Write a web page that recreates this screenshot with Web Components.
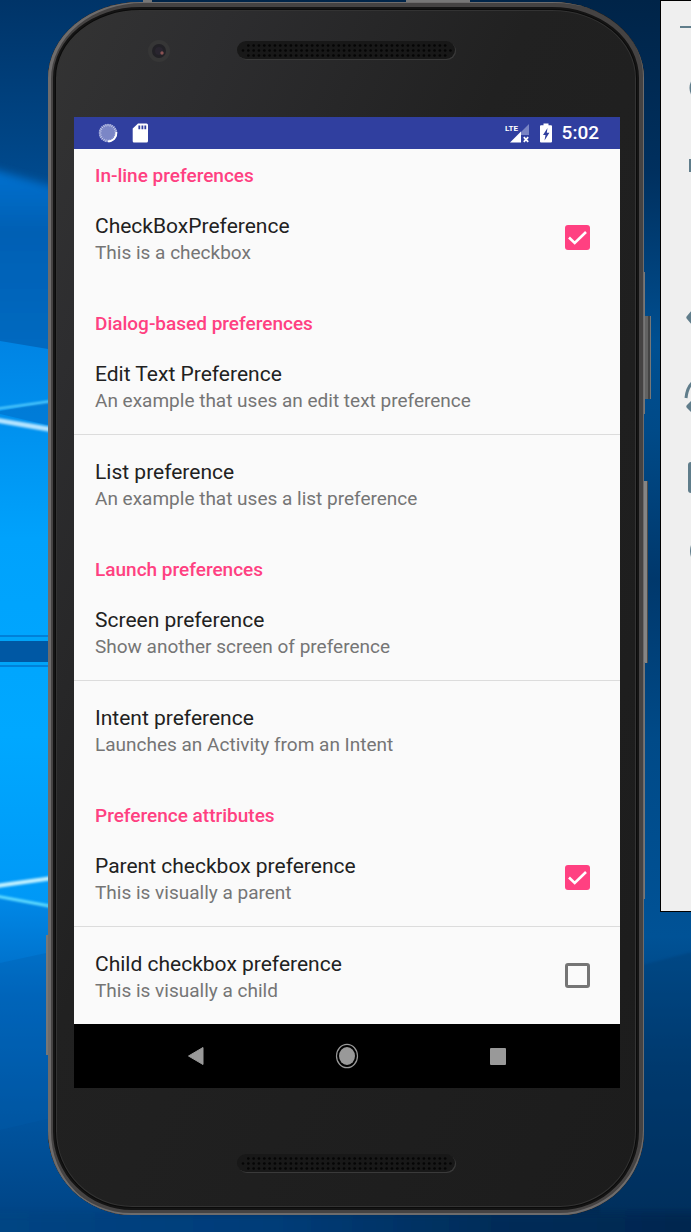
<!DOCTYPE html>
<html lang="en">
<head>
<meta charset="utf-8">
<title>Preferences</title>
<style>
html,body{margin:0;min-height:100%}
body{font-family:Roboto,"Noto Sans",sans-serif;background:#003a70}
</style>
</head>
<body>
<desk-top>
  <phone-device>
    <status-bar time="5:02"></status-bar>
    <pref-list>
      <pref-group heading="In-line preferences">
        <pref-check heading="CheckBoxPreference" summary="This is a checkbox" checked></pref-check>
      </pref-group>
      <pref-group heading="Dialog-based preferences">
        <pref-item heading="Edit Text Preference" summary="An example that uses an edit text preference" divided></pref-item>
        <pref-item heading="List preference" summary="An example that uses a list preference"></pref-item>
      </pref-group>
      <pref-group heading="Launch preferences">
        <pref-item heading="Screen preference" summary="Show another screen of preference" divided></pref-item>
        <pref-item heading="Intent preference" summary="Launches an Activity from an Intent"></pref-item>
      </pref-group>
      <pref-group heading="Preference attributes">
        <pref-check heading="Parent checkbox preference" summary="This is visually a parent" checked divided></pref-check>
        <pref-check heading="Child checkbox preference" summary="This is visually a child"></pref-check>
      </pref-group>
    </pref-list>
    <nav-bar></nav-bar>
  </phone-device>
  <emulator-tools slot="tools"></emulator-tools>
</desk-top>
<script>
class Base extends HTMLElement {
  constructor() {
    super();
    this.attachShadow({ mode: 'open' });
  }
  connectedCallback() {
    this.shadowRoot.innerHTML = this.view();
  }
}

customElements.define('desk-top', class extends Base {
  view() {
    return `<style>
:host{display:flex;position:relative;min-height:100vh;box-sizing:border-box;padding-left:48px;gap:16px;overflow:hidden;
 background:linear-gradient(#002448,#00305f 14%,#004f91 28%,#004a88 35%,#00386c 47%,#004a88 60%,#005296 76%,#00386c 87%,#002850)}
.wall{position:absolute;inset:0;width:100%;height:100%}
.phone{flex:1;position:relative;padding:2px 0 17px;min-width:0}
.tools{position:relative;flex:0 0 31px}
</style>
<svg class="wall" viewBox="0 0 691 1232" preserveAspectRatio="none" aria-hidden="true">
<defs>
<linearGradient id="t" x2="0" y2="1"><stop stop-color="#003468"/><stop offset=".5" stop-color="#004a8e"/><stop offset="1" stop-color="#0060b4"/></linearGradient>
<linearGradient id="m" x2="0" y2="1"><stop stop-color="#0084e4"/><stop offset=".35" stop-color="#00a2fc"/><stop offset=".7" stop-color="#00a8ff"/><stop offset="1" stop-color="#0098f6"/></linearGradient>
<linearGradient id="b" x2="0" y2="1"><stop stop-color="#0089e8"/><stop offset=".3" stop-color="#0068c0"/><stop offset=".7" stop-color="#00529c"/><stop offset="1" stop-color="#004282"/></linearGradient>
<linearGradient id="f" x2="1" y2="0"><stop stop-color="#004584"/><stop offset=".4" stop-color="#003c78"/><stop offset=".7" stop-color="#002c58"/><stop offset="1" stop-color="#00264e"/></linearGradient>
<linearGradient id="r" x2="0" y2="1"><stop stop-color="#0072d2"/><stop offset=".3" stop-color="#0060b4"/><stop offset="1" stop-color="#006cc4"/></linearGradient>
<filter id="s"><feGaussianBlur stdDeviation="1"/></filter>
<filter id="w"><feGaussianBlur stdDeviation="4"/></filter>
</defs>
<path fill="url(#t)" d="M0 0H150V360H0z"/>
<path fill="url(#r)" filter="url(#w)" d="M-20 166L80 194V380H-20z"/>
<path fill="url(#m)" d="M0 341L60 351V905H0z"/>
<path fill="#0060b8" opacity=".4" d="M0 411L60 400V428L0 414z"/>
<path fill="url(#b)" d="M0 897L60 908H140V1232H0z"/>
<g filter="url(#s)">
<path stroke="#5fd4ff" stroke-width="2" d="M-4 409L60 400"/>
<path stroke="#b4e4ff" stroke-width="5" d="M-4 420L60 431"/>
<path stroke="#c0f0ff" stroke-width="4" d="M-4 886L60 877"/>
<path stroke="#60dcff" stroke-width="3" d="M-4 896L60 908"/>
</g>
<path fill="#0080d8" d="M0 635H60V667H0z"/>
<path fill="#00a4f8" d="M0 637H60V665H0z"/>
<path fill="#0058a4" d="M0 641H60V662H0z"/>
<path fill="#005cac" opacity=".3" d="M0 963L60 950V1116L0 1130z"/>
<path fill="#003a70" opacity=".35" filter="url(#s)" d="M600 976L700 950V1250H600z"/>
<path fill="url(#f)" filter="url(#w)" d="M-20 1212H720V1260H-20z"/>
</svg>
<div class="phone"><slot></slot></div>
<div class="tools"><slot name="tools"></slot></div>`;
  }
});

customElements.define('phone-device', class extends Base {
  view() {
    return `<style>
:host{display:block;position:relative}
.body{position:relative;box-sizing:border-box;border-radius:92px 92px 84px 84px / 76px 76px 84px 84px;padding:115px 24px 127px 26px;
 background:linear-gradient(115deg,#343434,#2d2d2f 16%,#212121 42%,#1c1c1c);
 box-shadow:inset 3px 1px 0 #6e6c6c,inset -1px -2px 0 #6e6c6c,inset 0 0 0 5px #454343,inset 0 0 0 7px #141414,inset 0 0 0 8px #0b0b0b,inset 0 0 0 9px #333}
.lens{position:absolute;left:99px;top:37px;width:24px;height:24px}
.speaker{position:absolute;left:50%;margin-left:-109px;width:220px;height:20px}
.top{top:39px}.bottom{bottom:41px}
.key{position:absolute;background:linear-gradient(90deg,#858585 0 3px,#4b4b4b 3px)}
.k1{right:-7px;top:314px;width:7px;height:83px;background:linear-gradient(90deg,#626262 0 4px,#444 4px 6px,#777 6px)}
.k2{right:-4px;top:479px;width:4px;height:182px}
.k3{left:-2px;top:933px;width:3px;height:120px;background:#777}
.k4{left:358px;top:-2px;width:64px;height:2px;background:#777}
.k5{left:95px;top:-2px;width:9px;height:2px;background:#777}
.k6{right:-1px;top:270px;width:2px;height:142px;background:#777}
.k7{right:-1px;top:660px;width:2px;height:237px;background:#777}
</style>
<i class="key k1"></i><i class="key k2"></i><i class="key k3"></i><i class="key k4"></i><i class="key k5"></i><i class="key k6"></i><i class="key k7"></i>
<div class="body">
<svg class="lens" viewBox="0 0 24 24" aria-hidden="true"><circle cx="12" cy="12" r="11" fill="#363636"/><circle cx="12" cy="12" r="7" fill="#222126"/><circle cx="12" cy="12" r="4" fill="#29252f"/><circle cx="15" cy="14" r="1.7" fill="#8b5353"/></svg>
<mesh-grille class="speaker top"></mesh-grille>
<slot></slot>
<mesh-grille class="speaker bottom"></mesh-grille>
</div>`;
  }
});

customElements.define('mesh-grille', class extends Base {
  view() {
    let dots = '';
    for (let x = 0; x < 40; x++) {
      for (let y = 0; y < 3; y++) {
        if ((x === 0 || x === 39) && y !== 1) continue;
        dots += `<circle cx="${6 + x * 5.32}" cy="${4.5 + y * 5}" r="1.3"/>`;
      }
    }
    return `<style>:host{display:block}svg{display:block;width:100%;height:100%}</style>
<svg viewBox="0 0 220 20" aria-hidden="true"><rect x="1" y="1" width="218" height="18" rx="9" fill="#3a3a3a"/><rect width="218" height="18" rx="9" fill="#181818"/><g fill="#050505">${dots}</g></svg>`;
  }
});

customElements.define('status-bar', class extends Base {
  view() {
    let ticks = '';
    for (let i = 0; i < 24; i++) ticks += `<path d="M10 1V3.2" transform="rotate(${i * 15} 10 10)"/>`;
    return `<style>
:host{display:flex;align-items:center;height:32px;box-sizing:border-box;padding:0 21px 0 24px;background:#303f9f;color:#fff}
svg{display:block}
.card{margin-left:14px}.signal{margin-left:auto}.battery{margin:0 10px 0 11px}
.network{font-size:8px;font-weight:700}
time{font-size:19px;line-height:32px;font-weight:500}
</style>
<svg width="20" height="20" viewBox="0 0 20 20" aria-hidden="true"><circle cx="10" cy="10" r="9.3" fill="#7b86c6"/><g stroke="#c5cae9" stroke-width=".9">${ticks}</g><path d="M18.400 9A8.500 8.500 0 0 1 10 18.400" fill="none" stroke="#fff" stroke-width="1.800"/></svg>
<svg class="card" width="16" height="20" viewBox="0 0 16 20" aria-hidden="true"><path fill="#fff" d="M6 .5H14.500Q16 .5 16 2V18Q16 19.500 14.500 19.500H2Q.7 19.500.7 18V5.500z"/><path fill="#303f9f" d="M6.400 2.500h1.800v3.700H6.400zM9.500 2.500h1.800v3.700H9.500zM12.400 2.500h1.800v3.700h-1.800z"/></svg>
<svg class="signal" width="24" height="20" viewBox="0 0 24 20"><path fill="#7984c4" d="M24 1V12H16V9z"/><path fill="#fff" d="M16 8.500V19.500H5z"/><path stroke="#fff" stroke-width="1.700" d="M18.800 14.200l4.400 4.600M23.200 14.200l-4.400 4.600"/><text class="network" x="0" y="8" fill="#fff">LTE</text></svg>
<svg class="battery" width="12" height="20" viewBox="0 0 12 20" role="img" aria-label="Charging"><path fill="#fff" d="M3.500.5h5V2.300H11q1 0 1 1V18.500q0 1-1 1H1q-1 0-1-1V3.300q0-1 1-1H3.500z"/><path fill="#303f9f" d="M7.500 5L3 12H5.500L4.500 17.500L9.400 9.800H6.800z"/></svg>
<time>${this.getAttribute('time')}</time>`;
  }
});

customElements.define('pref-list', class extends Base {
  view() {
    return `<style>
:host{display:block;background:#fafafa}
::slotted(pref-group:first-child){--head-pad:14px}
</style><slot></slot>`;
  }
});

customElements.define('pref-group', class extends Base {
  view() {
    return `<style>
:host{display:block}
h2{margin:0;padding:var(--head-pad,25px) 21px 0;font-size:19px;line-height:26px;font-weight:500;color:#ff4081}
</style><h2>${this.getAttribute('heading')}</h2><slot></slot>`;
  }
});

const rowStyle = `
:host{display:block}
:host([divided]){border-bottom:1px solid #dcdcdc}
.row{display:flex;align-items:center;width:100%;box-sizing:border-box;margin:0;border:0;background:none;padding:21px 30px 22px 21px;font:inherit;text-align:left;cursor:pointer}
.copy{flex:1;display:block}
.title,.summary{display:block}
.title{font-size:21px;line-height:32px;color:#212121}
.summary{font-size:19px;line-height:22px;color:#757575}
`;

customElements.define('pref-item', class extends Base {
  view() {
    return `<style>${rowStyle}</style>
<button class="row" type="button"><span class="copy"><span class="title">${this.getAttribute('heading')}</span><span class="summary">${this.getAttribute('summary')}</span></span></button>`;
  }
});

customElements.define('pref-check', class extends Base {
  view() {
    return `<style>${rowStyle}
input{appearance:none;flex:none;width:25px;height:25px;margin:0;box-sizing:border-box;border:3px solid #757575;border-radius:3px}
input:checked{border:0;background:#ff4081}
.tick{display:grid}
.tick>*{grid-area:1/1}
svg{width:25px;height:25px;pointer-events:none;visibility:hidden}
input:checked+svg{visibility:visible}
</style>
<label class="row" for="box"><span class="copy"><span class="title">${this.getAttribute('heading')}</span><span class="summary">${this.getAttribute('summary')}</span></span>
<span class="tick"><input id="box" type="checkbox" ${this.hasAttribute('checked') ? 'checked' : ''}><svg viewBox="0 0 25 25" aria-hidden="true"><path fill="none" stroke="#fff" stroke-width="2.600" d="M4 12.500L9.700 18L21 7"/></svg></span></label>`;
  }
});

customElements.define('nav-bar', class extends Base {
  view() {
    return `<style>
:host{display:flex;justify-content:center;gap:127px;height:64px;background:#000}
button{display:grid;place-items:center;width:24px;padding:0;border:0;background:none;cursor:pointer}
svg{display:block}
</style>
<button type="button" aria-label="Back"><svg width="24" height="26" viewBox="0 0 24 26"><path fill="#999" stroke="#999" stroke-linejoin="round" d="M4.500 13L19 4.500V21.500z"/></svg></button>
<button type="button" aria-label="Home"><svg width="24" height="26" viewBox="0 0 24 26"><ellipse cx="12" cy="13" rx="10.500" ry="11.700" fill="none" stroke="#999" stroke-width="1.200"/><ellipse cx="12" cy="13" rx="8" ry="9" fill="#999"/></svg></button>
<button type="button" aria-label="Overview"><svg width="24" height="26" viewBox="0 0 24 26"><rect x="4" y="5" width="16" height="17" rx="1" fill="#999"/></svg></button>`;
  }
});

customElements.define('emulator-tools', class extends Base {
  view() {
    const tool = (name, art) => `<button type="button" aria-label="${name}"><svg viewBox="0 0 30 78" width="30" height="78" aria-hidden="true" fill="#607d8b">${art}</svg></button>`;
    return `<style>
:host{display:block;box-sizing:border-box;background:#efefef;border:1px solid #000;border-right:0;padding-bottom:315px;overflow:hidden}
button{display:block;padding:0;border:0;background:none;cursor:pointer}
.min{padding:25px 0 22px 19px}
svg{display:block}
</style>
<button class="min" type="button" aria-label="Minimize"><svg width="11" height="2" aria-hidden="true"><path fill="#607d8b" d="M0 0h11v2H0z"/></svg></button>
${tool('Power', '<path fill="none" stroke="#607d8b" stroke-width="3" d="M32 31Q28 38 32 45"/>')}
${tool('Volume up', '<path d="M28 31h2v13h-2z"/>')}
${tool('Volume down', '')}
${tool('Rotate left', '<path d="M31 26L26 32Q24.500 33.500 26 35L31 41z"/>')}
${tool('Rotate right', '<path d="M31 38L26 43Q24.500 44.500 26 46L31 51z"/><path fill="none" stroke="#607d8b" stroke-width="3" d="M25 36Q26 26 31 21"/>')}
${tool('Screenshot', '<path d="M30 22Q27 22 27 25V50Q27 53 30 53z"/>')}
${tool('Zoom', '<path d="M30 27Q28 33 30 39z"/>')}`;
  }
});
</script>
</body>
</html>
